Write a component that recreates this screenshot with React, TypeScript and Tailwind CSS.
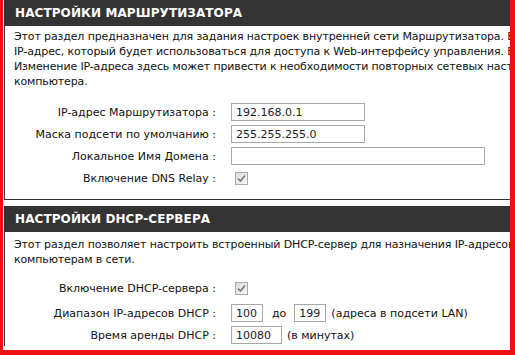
import type { ReactNode } from "react";

function Checkbox() {
  return (
    <span className="ml-[4px] inline-flex h-[13px] w-[13px] items-center justify-center border border-[#a9a9a9] bg-gradient-to-br from-[#dcdcdc] to-[#f8f8f8]">
      <svg width="9" height="9" viewBox="0 0 9 9">
        <path d="M1 4.5 L3.5 7 L8 1.5" fill="none" stroke="#7a7a7a" strokeWidth="1.7" />
      </svg>
    </span>
  );
}

function TextBox({ value = "", width }: { value?: string; width: string }) {
  return (
    <span
      className={`flex h-[18px] items-center border border-[#a8a8a8] bg-white pl-[4px] text-[11px] text-[#222] ${width}`}
    >
      {value}
    </span>
  );
}

function Row({
  label,
  children,
  className = "",
}: {
  label: string;
  children: ReactNode;
  className?: string;
}) {
  return (
    <div className={`flex h-[22px] items-center ${className}`}>
      <div className="w-[211px] shrink-0 text-right">{label}</div>
      <div className="ml-[15px] flex items-center">{children}</div>
    </div>
  );
}

function Header({ title }: { title: string }) {
  return (
    <div className="flex h-[25px] items-center bg-[#333333] pl-[10px] text-[12px] font-bold tracking-[0.1px] text-white">
      {title}
    </div>
  );
}

export default function App() {
  return (
    <div className="h-[355px] w-[515px] overflow-hidden border-b-[5px] border-l-[3px] border-r-[5px] border-[#ee1111] bg-white font-['DejaVu_Sans',sans-serif] text-[11px] leading-[15px] text-[#111]">
      <div className="w-[600px] pl-[1px]">
        <section className="border-l border-b border-t border-[#333333] pb-[10px]">
          <Header title="НАСТРОЙКИ МАРШРУТИЗАТОРА" />
          <div className="whitespace-nowrap pl-[9px] pt-[3px] tracking-[-0.13px]">
            <div>
              Этот раздел предназначен для задания настроек внутренней сети Маршрутизатора. Вы можете
            </div>
            <div>
              IP-адрес, который будет использоваться для доступа к Web-интерфейсу управления. Вы
            </div>
            <div>
              Изменение IP-адреса здесь может привести к необходимости повторных сетевых настроек
            </div>
            <div>компьютера.</div>
          </div>
          <div className="mt-[12px]">
            <Row label="IP-адрес Маршрутизатора :">
              <TextBox value="192.168.0.1" width="w-[134px]" />
            </Row>
            <Row label="Маска подсети по умолчанию :">
              <TextBox value="255.255.255.0" width="w-[134px]" />
            </Row>
            <Row label="Локальное Имя Домена :">
              <TextBox width="w-[254px]" />
            </Row>
            <Row label="Включение DNS Relay :">
              <Checkbox />
            </Row>
          </div>
        </section>

        <section className="mt-[6px] border-l border-t border-[#333333]">
          <Header title="НАСТРОЙКИ DHCP-СЕРВЕРА" />
          <div className="whitespace-nowrap pl-[9px] pt-[5px] tracking-[-0.13px]">
            <div>
              Этот раздел позволяет настроить встроенный DHCP-сервер для назначения IP-адресов
            </div>
            <div>компьютерам в сети.</div>
          </div>
          <div className="mt-[10px]">
            <Row label="Включение DHCP-сервера :">
              <Checkbox />
            </Row>
            <Row label="Диапазон IP-адресов DHCP :" className="mt-[3px]">
              <TextBox value="100" width="w-[32px]" />
              <span className="ml-[9px]">до</span>
              <span className="ml-[8px]">
                <TextBox value="199" width="w-[32px]" />
              </span>
              <span className="ml-[5px]">(адреса в подсети LAN)</span>
            </Row>
            <Row label="Время аренды DHCP :">
              <TextBox value="10080" width="w-[51px]" />
              <span className="ml-[5px]">(в минутах)</span>
            </Row>
          </div>
        </section>
      </div>
    </div>
  );
}
